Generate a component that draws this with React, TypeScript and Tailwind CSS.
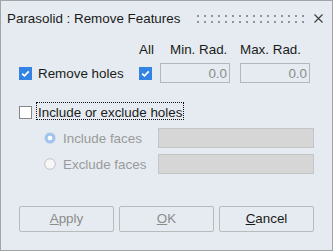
import React from "react";

const font = { fontFamily: '"Liberation Sans", Arial, sans-serif' };

function CheckBox({ checked }: { checked: boolean }) {
  return checked ? (
    <svg width="13" height="13" viewBox="0 0 13 13" className="shrink-0 block">
      <rect x="0" y="0" width="13" height="13" fill="#3283e3" />
      <path d="M3.2 6.6 L5.4 8.8 L9.8 4.3" stroke="#ffffff" strokeWidth="1.7" fill="none" />
    </svg>
  ) : (
    <svg width="13" height="13" viewBox="0 0 13 13" className="shrink-0 block">
      <rect x="0.5" y="0.5" width="12" height="12" fill="#ffffff" stroke="#858585" />
    </svg>
  );
}

function Radio({ checked }: { checked: boolean }) {
  return checked ? (
    <svg width="12" height="12" viewBox="0 0 12 12" className="shrink-0 block">
      <circle cx="6" cy="6" r="5.5" fill="#a3c4ee" />
      <circle cx="6" cy="6" r="2.3" fill="#ffffff" />
    </svg>
  ) : (
    <svg width="12" height="12" viewBox="0 0 12 12" className="shrink-0 block">
      <circle cx="6" cy="6" r="5.3" fill="#f7f7f7" stroke="#c3c3c3" />
    </svg>
  );
}

function Grip() {
  const dots = [];
  for (let i = 0; i < 16; i++) {
    dots.push(<rect key={"a" + i} x={i * 7} y={0} width="2" height="2" fill="#8f9499" />);
    dots.push(<rect key={"b" + i} x={i * 7} y={6} width="2" height="2" fill="#8f9499" />);
  }
  return (
    <svg width="107" height="8" viewBox="0 0 107 8" className="block mt-[4px]">
      {dots}
    </svg>
  );
}

export default function App() {
  return (
    <div
      style={font}
      className="w-[333px] h-[251px] box-border border border-[#a2a4a6] bg-[#e5ebf0] flex flex-col text-[13.4px] leading-[16px] text-[#1b1b1b] overflow-hidden"
    >
      {/* Title */}
      <div className="flex items-start mt-[10px] h-[16px] pl-[6px]">
        <div className="w-[190px] whitespace-nowrap">Parasolid : Remove Features</div>
        <Grip />
        <svg width="9" height="9" viewBox="0 0 9 9" className="block mt-[3px] ml-auto mr-[9px]">
          <path d="M0.5 0.5 L8.5 8.5 M8.5 0.5 L0.5 8.5" stroke="#3c3c3c" strokeWidth="1.1" />
        </svg>
      </div>

      {/* Header labels */}
      <div className="flex mt-[15px] h-[16px] pl-[18px]">
        <div className="w-[120px]" />
        <div className="w-[21px]">All</div>
        <div className="w-[70px] pl-[10px] whitespace-nowrap">Min. Rad.</div>
        <div className="w-[70px] ml-[10px] whitespace-nowrap">Max. Rad.</div>
      </div>

      {/* Remove holes row */}
      <div className="flex items-start mt-[5px] h-[20px] pl-[18px]">
        <div className="w-[120px] flex items-start">
          <div className="mt-[4px]">
            <CheckBox checked />
          </div>
          <div className="ml-[6px] mt-[3px] whitespace-nowrap">Remove holes</div>
        </div>
        <div className="w-[21px] mt-[4px]">
          <CheckBox checked />
        </div>
        <div className="w-[70px] h-[20px] box-border border border-[#b4b7ba] pt-[2px] pr-[2px] text-right text-[#8c8c8c]">
          0.0
        </div>
        <div className="w-[70px] h-[20px] ml-[10px] box-border border border-[#b4b7ba] pt-[2px] pr-[2px] text-right text-[#8c8c8c]">
          0.0
        </div>
      </div>

      {/* Include or exclude */}
      <div className="flex items-start mt-[19px] h-[18px] pl-[18px]">
        <div className="mt-[4px]">
          <CheckBox checked={false} />
        </div>
        <div className="ml-[4px] h-[18px] box-border border border-dotted border-[#111] pt-[2px] px-[1px] leading-[15px] whitespace-nowrap">
          Include or exclude holes
        </div>
      </div>

      {/* Radio rows */}
      <div className="flex items-center mt-[8px] h-[20px] pl-[43px]">
        <div className="w-[114px] flex items-center text-[#9a9a9a]">
          <Radio checked />
          <span className="ml-[7px] mt-[1px] whitespace-nowrap">Include faces</span>
        </div>
        <div className="w-[156px] h-[20px] box-border border border-[#c3c5c7] bg-[#d6d6d6]" />
      </div>
      <div className="flex items-center mt-[6px] h-[20px] pl-[43px]">
        <div className="w-[114px] flex items-center text-[#9a9a9a]">
          <Radio checked={false} />
          <span className="ml-[7px] mt-[1px] whitespace-nowrap">Exclude faces</span>
        </div>
        <div className="w-[156px] h-[20px] box-border border border-[#c3c5c7] bg-[#d6d6d6]" />
      </div>

      {/* Buttons */}
      <div className="flex mt-[32px] pl-[18px] gap-[5px]">
        <button className="w-[95px] h-[26px] box-border border border-[#b8babc] rounded-[2px] bg-[#e5ebf0] text-[#8c8c8c] flex items-center justify-center">
          <span><u>A</u>pply</span>
        </button>
        <button className="w-[95px] h-[26px] box-border border border-[#b8babc] rounded-[2px] bg-[#e5ebf0] text-[#8c8c8c] flex items-center justify-center">
          <span><u>O</u>K</span>
        </button>
        <button className="w-[95px] h-[26px] box-border border border-[#b8babc] rounded-[2px] bg-[#e5ebf0] text-[#1b1b1b] flex items-center justify-center">
          <span><u>C</u>ancel</span>
        </button>
      </div>
    </div>
  );
}
